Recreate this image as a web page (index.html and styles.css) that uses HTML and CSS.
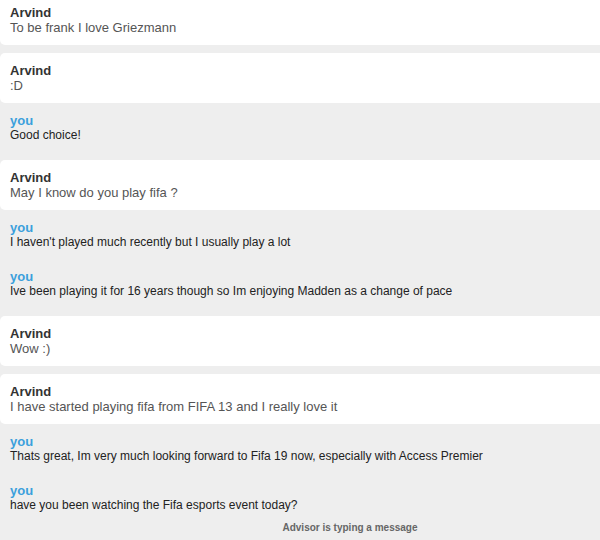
FILE: index.html
```html
<!DOCTYPE html>
<html>
<head>
<meta charset="utf-8">
<link rel="stylesheet" href="styles.css">
</head>
<body>
<div class="chat">
  <div class="log">
    <div class="msg them"><div class="name">Arvind</div><div class="text">To be frank I love Griezmann</div></div>
    <div class="msg them"><div class="name">Arvind</div><div class="text">:D</div></div>
    <div class="msg me"><div class="name">you</div><div class="text">Good choice!</div></div>
    <div class="msg them"><div class="name">Arvind</div><div class="text">May I know do you play fifa ?</div></div>
    <div class="msg me"><div class="name">you</div><div class="text">I haven't played much recently but I usually play a lot</div></div>
    <div class="msg me"><div class="name">you</div><div class="text">Ive been playing it for 16 years though so Im enjoying Madden as a change of pace</div></div>
    <div class="msg them"><div class="name">Arvind</div><div class="text">Wow :)</div></div>
    <div class="msg them"><div class="name">Arvind</div><div class="text">I have started playing fifa from FIFA 13 and I really love it</div></div>
    <div class="msg me"><div class="name">you</div><div class="text">Thats great, Im very much looking forward to Fifa 19 now, especially with Access Premier</div></div>
    <div class="msg me"><div class="name">you</div><div class="text">have you been watching the Fifa esports event today?</div></div>
  </div>
  <div class="typing">Advisor is typing a message</div>
</div>
</body>
</html>
```
FILE: styles.css
```css
html, body {
  margin: 0;
  padding: 0;
  background: #eeeeee;
  overflow: hidden;
}
.chat {
  width: 700px;
  height: 540px;
  background: #eeeeee;
  font-family: "Liberation Sans", Arial, sans-serif;
  display: flex;
  flex-direction: column;
}
.log {
  margin-top: -5px;
  display: flex;
  flex-direction: column;
}
.msg {
  padding: 10px;
}
.msg .name {
  font-weight: bold;
  font-size: 13px;
  line-height: 15px;
}
.msg .text {
  line-height: 15px;
}
.them {
  background: #ffffff;
  border-radius: 5px;
  margin-top: 8px;
}
.them:first-child {
  margin-top: 0;
}
.them .name {
  color: #333333;
}
.them .text {
  font-size: 13px;
  color: #555555;
}
.me {
  background: #eeeeee;
  padding-bottom: 9px;
}
.me .name {
  color: #3ba0dc;
}
.me .text {
  font-size: 12px;
  color: #222222;
}
.typing {
  text-align: center;
  font-size: 10px;
  font-weight: bold;
  color: #666666;
  line-height: 14px;
  margin-top: -1px;
}
```
